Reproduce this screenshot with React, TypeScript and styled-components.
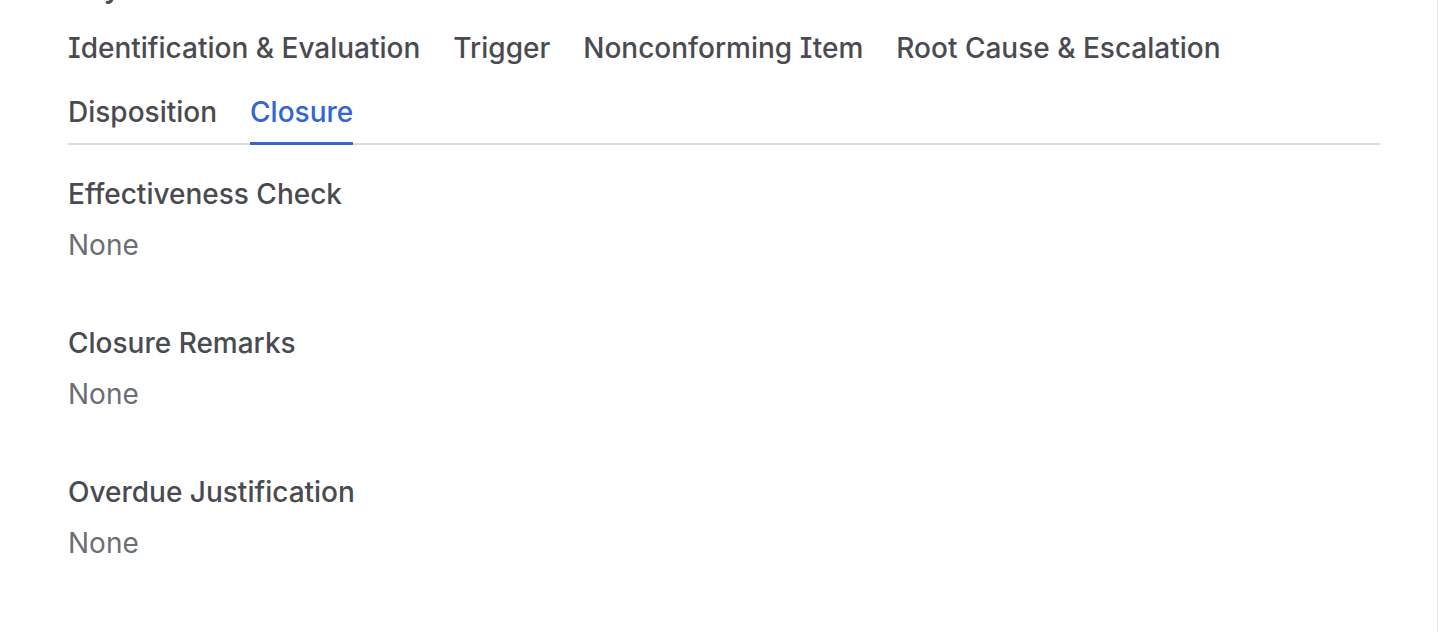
import React, { useState } from 'react';
import styled, { createGlobalStyle } from 'styled-components';

const GlobalStyle = createGlobalStyle`
	html, body {
		margin: 0;
		padding: 0;
		background: #ffffff;
		font-family: Inter, 'Noto Sans', 'Liberation Sans', sans-serif;
		font-feature-settings: 'cv08' 1;
		overflow: hidden;
	}
`;

const tabs = [
	'Identification & Evaluation',
	'Trigger',
	'Nonconforming Item',
	'Root Cause & Escalation',
	'Disposition',
	'Closure',
];

const fields = [
	{ label: 'Effectiveness Check', value: 'None' },
	{ label: 'Closure Remarks', value: 'None' },
	{ label: 'Overdue Justification', value: 'None' },
];

const App = (): JSX.Element => {
	const [active, setActive] = useState('Closure');

	return (
		<>
			<GlobalStyle />
			<StyledPanel>
				<Heading>Key Details</Heading>
				<TabList>
					{tabs.map((tab) => (
						<Tab key={tab} $active={tab === active} onClick={() => setActive(tab)}>
							{tab}
						</Tab>
					))}
				</TabList>
				<Fields>
					{fields.map((field) => (
						<Field key={field.label}>
							<Label>{field.label}</Label>
							<Value>{field.value}</Value>
						</Field>
					))}
				</Fields>
			</StyledPanel>
		</>
	);
};

const StyledPanel = styled.main`
	box-sizing: border-box;
	width: 1438px;
	height: 632px;
	padding: 0 57px 0 68px;
	border-right: 1px solid #e3e3e6;
	overflow: hidden;
`;

const Heading = styled.h2`
	margin: -27px 0 0;
	font-size: 28px;
	line-height: 30px;
	font-weight: 600;
	letter-spacing: 0.6px;
	color: #4a4b51;
`;

const TabList = styled.nav`
	display: flex;
	flex-wrap: wrap;
	column-gap: 33px;
	row-gap: 16px;
	margin-top: 28px;
	border-bottom: 2px solid #dcdcdf;
`;

const Tab = styled.button<{ $active: boolean }>`
	appearance: none;
	background: none;
	border: none;
	border-bottom: 3px solid ${(p) => (p.$active ? '#3166d4' : 'transparent')};
	margin: 0 0 -2px;
	padding: 0 0 13px;
	font-family: inherit;
	font-feature-settings: inherit;
	font-size: 28px;
	line-height: 34px;
	font-weight: 500;
	color: ${(p) => (p.$active ? '#3166d4' : '#4a4b51')};
	cursor: pointer;
`;

const Fields = styled.section`
	display: flex;
	flex-direction: column;
	gap: 64px;
	margin-top: 32px;
`;

const Field = styled.div`
	display: flex;
	flex-direction: column;
	gap: 17px;
`;

const Label = styled.h3`
	margin: 0;
	font-size: 28px;
	line-height: 34px;
	font-weight: 500;
	color: #4a4b51;
`;

const Value = styled.p`
	margin: 0;
	font-size: 28px;
	line-height: 34px;
	font-weight: 400;
	color: #6c6e75;
`;

export default App;
